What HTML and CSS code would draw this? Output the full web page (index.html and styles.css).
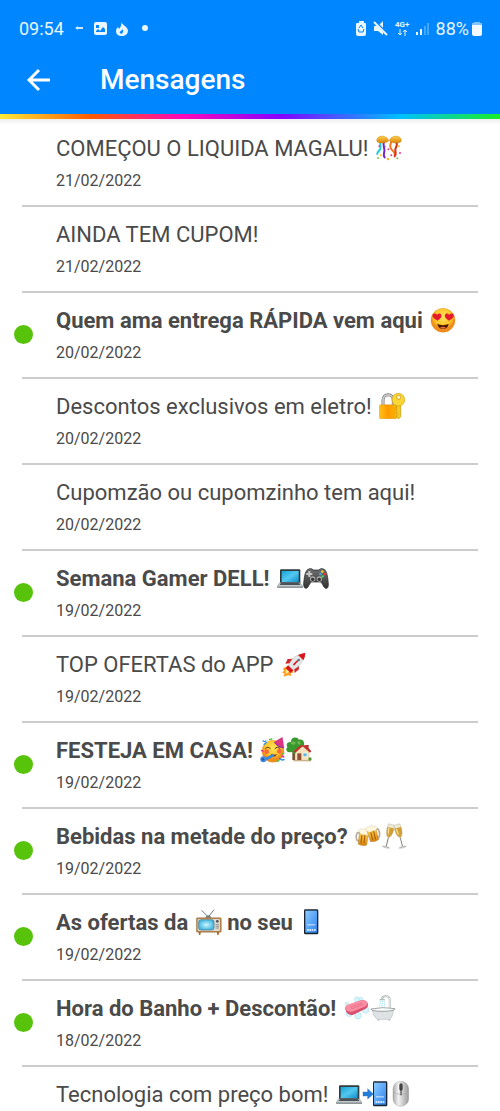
FILE: index.html
```html
<!DOCTYPE html>
<html lang="pt-BR">
<head>
  <meta charset="UTF-8">
  <meta name="viewport" content="width=device-width, initial-scale=1.0">
  <title>Mensagens</title>
  <link rel="stylesheet" href="styles.css">
</head>
<body>
  <!-- Desenhos usados nos títulos -->
  <svg class="sprite" aria-hidden="true">
    <defs>
      <linearGradient id="gold" x2="0" y2="1"><stop offset="0" stop-color="#ffcf4a"/><stop offset="1" stop-color="#d98208"/></linearGradient>
      <linearGradient id="lockFill"><stop offset="0" stop-color="#ffc21a"/><stop offset=".5" stop-color="#ff9a00"/><stop offset="1" stop-color="#f7b500"/></linearGradient>
      <radialGradient id="face" cx=".5" cy=".35"><stop offset="0" stop-color="#ffe45c"/><stop offset=".7" stop-color="#fdc62a"/><stop offset="1" stop-color="#ee8d1c"/></radialGradient>
      <linearGradient id="screen" x2="1" y2="1"><stop offset="0" stop-color="#12a2da"/><stop offset=".5" stop-color="#54c8ef"/><stop offset="1" stop-color="#0d8fcc"/></linearGradient>
      <linearGradient id="phoneFill" x2="1" y2="1"><stop offset="0" stop-color="#8ccbff"/><stop offset="1" stop-color="#2f83ee"/></linearGradient>
      <linearGradient id="pad" x2="0" y2="1"><stop offset="0" stop-color="#707070"/><stop offset="1" stop-color="#333"/></linearGradient>
      <linearGradient id="silver"><stop offset="0" stop-color="#aaa"/><stop offset=".35" stop-color="#f2f2f2"/><stop offset="1" stop-color="#999"/></linearGradient>
      <radialGradient id="tvFill"><stop offset="0" stop-color="#c9f5ff"/><stop offset="1" stop-color="#48b8e2"/></radialGradient>
    </defs>
    <symbol id="confetti" viewBox="0 0 78 78">
      <g fill="none" stroke-width="6" stroke-linecap="round">
        <path stroke="#1ccfd4" d="M14 20c-4 12 2 12-1 21-3 8-10 9-9 16"/>
        <path stroke="#7424c7" d="M24 20c-5 12 3 18 1 29-1 9-4 11 1 18"/>
        <path stroke="#f67718" d="M46 20c-4 12-5 17 1 24 6 7 10 7 9 14"/>
        <path stroke="#d82f16" d="M60 20c8 10-2 16-2 24 0 8 4 14-2 20"/>
      </g>
      <path fill="url(#gold)" stroke="#ba760b" d="M3 20C-1 8 12 1 24 4q11 3 14 12c-1 9-28 11-35 4zM75 20C79 8 66 1 54 4q-11 3-14 12c1 9 28 11 35 4z"/>
      <g fill="#f238a0"><circle cx="10" cy="34" r="3"/><circle cx="46" cy="61" r="3"/><circle cx="72" cy="54" r="3"/><circle cx="37" cy="43" r="3"/></g>
      <g fill="#ffb81c"><circle cx="36" cy="72" r="4"/><circle cx="14" cy="61" r="3"/><circle cx="69" cy="34" r="3"/></g>
      <g fill="#7bbd42"><circle cx="29" cy="34" r="2"/><circle cx="6" cy="69" r="3"/><circle cx="64" cy="70" r="3"/></g>
    </symbol>
    <symbol id="heart-eyes" viewBox="0 0 78 78">
      <circle cx="39" cy="40" r="36" fill="url(#face)" stroke="#d97813"/>
      <path fill="#e5192b" d="M22 41C8 33 5 27 9 22c4-4 10-2 12 2 3-5 10-6 13-1 3 6-3 12-12 18zM57 41C48 35 42 29 45 23c3-5 10-4 12 1 3-4 9-6 13-2 4 6-1 12-13 19z"/>
      <path fill="#4b1a05" d="M22 51q17 7 34 0c-3 20-31 20-34 0z"/><path fill="#f76b43" d="M30 62q9-6 18 0-9 6-18 0z"/>
    </symbol>
    <symbol id="lock" viewBox="0 0 78 78">
      <path fill="none" stroke="#777" stroke-width="9" d="M12 39V22C12 0 43 0 43 22v17"/>
      <path fill="none" stroke="#ccc" stroke-width="5" d="M12 39V22C12 0 43 0 43 22v17"/>
      <rect x="1" y="35" width="52" height="42" rx="4" fill="url(#lockFill)" stroke="#d88000"/>
      <path fill="#f7c81e" stroke="#c69205" stroke-width="2" d="M53 33h12v38l-5 6-9-5 5-7-4-5 4-4-4-4z"/>
      <circle cx="58" cy="20" r="19" fill="#fbd735" stroke="#cf9b0c" stroke-width="2"/><circle cx="59" cy="13" r="6" fill="#fff6c9" stroke="#b88b13" stroke-width="2"/>
    </symbol>
    <symbol id="laptop" viewBox="0 0 78 78">
      <path fill="#303b40" d="M12 13h55q3 0 3 3v42H9V16q0-3 3-3z"/><path fill="url(#screen)" d="M14 18h51v33H14z"/>
      <path fill="#c4cacc" stroke="#626b70" d="M8 53h62l8 12H0z"/><path fill="#495359" d="M12 54h54l4 6H8z"/><path fill="#6e777a" d="M0 65h78v3H1z"/>
    </symbol>
    <symbol id="gamepad" viewBox="0 0 78 78">
      <path fill="url(#pad)" stroke="#222" stroke-width="2" d="M15 13q9-6 17 2h14q9-8 18-2c9 6 11 29 12 44 1 18-11 17-17 2l-5-8H24l-7 11C10 77 0 69 2 54c2-15 3-35 13-41z"/>
      <g fill="#aaa"><circle cx="29" cy="42" r="8"/><circle cx="49" cy="42" r="8"/></g><g fill="#333"><circle cx="29" cy="43" r="5"/><circle cx="49" cy="43" r="5"/></g>
      <path fill="#c7c7c7" d="M16 18h6v6h6v6h-6v6h-6v-6h-6v-6h6z"/>
      <circle cx="58" cy="20" r="4" fill="#edc72f"/><circle cx="52" cy="27" r="4" fill="#49a7e3"/><circle cx="66" cy="27" r="4" fill="#ee3932"/><circle cx="59" cy="34" r="4" fill="#53c765"/>
    </symbol>
    <symbol id="rocket" viewBox="0 0 78 78">
      <path fill="#ff9e27" d="M18 46L6 52l3 7-6 6 7 2-2 10 13-4 10 2-2-8 9-3-4-9z"/><path fill="#fff08c" d="M22 50l-9 11 3 7 15-10z"/>
      <path fill="#d3282b" d="M37 23L20 24 13 38l14-1zM53 38l1 17-13 11-2-16z"/>
      <path fill="#e3e7e7" stroke="#9ca8a8" d="M22 45C30 24 43 10 69 9c0 23-14 39-36 49z"/>
      <path fill="#d9171f" d="M51 12q10-5 22-7 0 13-6 23zM21 43l16 15-8 8-15-14zM36 40l13-13 3 3-13 14z"/>
      <circle cx="53" cy="27" r="4" fill="#60777e"/>
    </symbol>
    <symbol id="party-face" viewBox="0 0 78 78">
      <circle cx="39" cy="43" r="33" fill="url(#face)" stroke="#df8b21"/>
      <path fill="#dd3584" stroke="#b2215f" d="M42 16L67 1l5 32q-18 0-30-17z"/><path fill="none" stroke="#7c37bd" stroke-width="3" d="M44 17q11 14 26 16"/>
      <g fill="#ff653c"><circle cx="20" cy="44" r="7"/><circle cx="58" cy="43" r="7"/></g>
      <path fill="none" stroke="#563210" stroke-width="3" stroke-linecap="round" d="M16 35q7-9 15 0M45 35q7-9 15 0"/>
      <path fill="#8d371b" d="M32 51q10 4 19 0-3 12-16 7z"/>
      <path fill="none" stroke="#3686de" stroke-width="8" stroke-linecap="round" d="M39 55L18 66"/><circle cx="10" cy="67" r="9" fill="#4288df"/><circle cx="9" cy="67" r="4" fill="#235cad"/>
      <path fill="none" stroke="#2b8cef" stroke-width="4" d="M8 10q6 7 11 1M11 23l9-7M57 63l8 6 9-1"/><path fill="none" stroke="#4bc23f" stroke-width="4" d="M27 8l10-2M65 51l8-3M50 74l8-4"/><path fill="none" stroke="#e32ba2" stroke-width="4" d="M3 40l8 3M65 56l8 5"/>
    </symbol>
    <symbol id="house" viewBox="0 0 78 78">
      <path fill="#75512e" d="M19 36h8v33h-8z"/><path fill="#39982e" d="M15 15c0-18 22-15 23-7 15-5 21 13 13 20 5 14-9 20-15 15-4 11-16 7-17 1C4 51-4 38 4 31-1 20 5 14 15 15z"/><path fill="#68b84e" d="M13 19q9-12 17 0-8 9-17 0zM32 14q14-5 12 8-8 4-12-8z"/>
      <path fill="#f4e1bb" stroke="#b79770" d="M28 43l19-17 22 17v27H28z"/><path fill="#bf302f" d="M23 43l20-18h18l15 18-4 4-22-19-22 19zM59 24h9v14l-9-8z"/>
      <path fill="#8e4d34" d="M34 49h12v21H34z"/><path fill="#5db3d7" stroke="#fff" stroke-width="2" d="M51 48h12v11H51z"/><path fill="#cab28a" d="M22 69h52v4H22z"/><circle cx="72" cy="66" r="5" fill="#4b9937"/>
    </symbol>
    <symbol id="beers" viewBox="0 0 78 78">
      <g transform="rotate(8 23 44)"><path fill="none" stroke="#b9ad9f" stroke-width="5" d="M13 31H5Q0 44 8 55h6"/><path fill="url(#gold)" stroke="#957754" d="M11 29h28l-1 36q-13 6-26 0z"/><path stroke="#a05b12" stroke-width="3" d="M20 35v26M29 35v26"/><path fill="#fff8df" stroke="#cfbd97" d="M8 24q4-9 12-5 8-6 12 1 10-1 9 9-10 12-14 3-9 10-19-8z"/></g>
      <g transform="rotate(-14 55 34)"><path fill="none" stroke="#b9ad9f" stroke-width="5" d="M65 21h7q6 12-2 25h-7"/><path fill="url(#gold)" stroke="#957754" d="M39 19h28v34q-13 6-26 0z"/><path stroke="#a05b12" stroke-width="3" d="M49 25v25M58 25v25"/><path fill="#fff8df" stroke="#cfbd97" d="M36 15q3-10 12-5 8-7 13 1 11-1 9 9-9 9-15 2-9 10-19-7z"/></g>
    </symbol>
    <symbol id="glasses" viewBox="0 0 78 78">
      <g transform="rotate(14 27 24)">
        <path fill="#eee9d6" stroke="#a7a18b" d="M17 4h19q5 34-9 42-14-8-10-42z"/><path fill="#cf9e35" d="M17 14h20q1 24-10 30-12-7-10-30z"/><path fill="#f5dd8d" d="M20 16h4l2 21q-7-5-6-21z"/>
        <path fill="none" stroke="#85837b" stroke-width="3" d="M27 45v27"/><path fill="#deddda" stroke="#777" d="M16 74q11-6 22 0-11 5-22 0z"/>
      </g>
      <g transform="rotate(-14 53 24)">
        <path fill="#eee9d6" stroke="#a7a18b" d="M43 4h19q5 34-9 42-14-8-10-42z"/><path fill="#cf9e35" d="M43 14h20q1 24-10 30-12-7-10-30z"/><path fill="#f5dd8d" d="M46 16h4l2 21q-7-5-6-21z"/>
        <path fill="none" stroke="#85837b" stroke-width="3" d="M53 45v27"/><path fill="#deddda" stroke="#777" d="M42 74q11-6 22 0-11 5-22 0z"/>
      </g>
    </symbol>
    <symbol id="tv" viewBox="0 0 78 78">
      <path fill="none" stroke="#75797b" stroke-width="3" d="M17 4l20 20L54 2"/><path fill="#727b7e" d="M27 26q10-14 20 0z"/>
      <path fill="#a86d2e" d="M7 66h8l-2 12H9zM62 66h8l-2 12h-4z"/><rect x="1" y="26" width="75" height="44" rx="4" fill="#b98245" stroke="#80562c"/><rect x="5" y="30" width="67" height="36" rx="3" fill="#d9d9d4"/>
      <rect x="8" y="32" width="46" height="31" rx="7" fill="url(#tvFill)" stroke="#47727f" stroke-width="2"/><circle cx="64" cy="37" r="4" fill="#4d5254"/><path stroke="#777" stroke-width="2" d="M59 47h10M59 52h10M59 57h10"/>
    </symbol>
    <symbol id="phone" viewBox="0 0 78 78">
      <rect x="18" y="1" width="43" height="75" rx="4" fill="#182431"/><path fill="url(#phoneFill)" d="M22 5h35v66H22z"/><path fill="#fff" opacity=".75" d="M27 46h25v3H27z"/><path stroke="#fff" stroke-width="4" stroke-dasharray="5 2" d="M27 63h26"/>
    </symbol>
    <symbol id="soap" viewBox="0 0 78 78">
      <g fill="#d5f3fa" stroke="#8bcddd"><circle cx="16" cy="55" r="10"/><circle cx="39" cy="13" r="8"/><circle cx="51" cy="13" r="6"/><circle cx="65" cy="45" r="10"/><circle cx="42" cy="62" r="10"/><circle cx="8" cy="27" r="5"/></g>
      <path fill="#d95070" d="M4 43q-2-9 8-13l40-14q15-3 19 9 4 10-6 16L28 59Q9 63 4 43z"/><path fill="#fa8da2" d="M4 39q0-7 11-11l37-12q13-2 17 7 3 8-7 12L25 50Q9 53 4 39z"/><path fill="none" stroke="#e76680" stroke-width="2" d="M20 36l32-11q7 1 1 5L24 41z"/>
    </symbol>
    <symbol id="bath" viewBox="0 0 78 78">
      <path fill="none" stroke="#8f9698" stroke-width="5" d="M59 42V12q-2-11-16-8-7 2-7 9"/><path fill="none" stroke="#eef0f1" stroke-width="3" d="M59 42V12q-2-11-16-8-7 2-7 9"/>
      <path fill="#c7d0d3" stroke="#849195" d="M28 15q8-8 17 0z"/><path stroke="#a8e2f5" stroke-width="3" stroke-dasharray="4 2" d="M32 18l-3 18M37 18v18M42 18l3 18"/>
      <path fill="#dee2e3" stroke="#828b8e" d="M7 45h63q-2 22-11 28H23Q10 66 7 45z"/><path fill="#f8fafb" stroke="#777f81" stroke-width="2" d="M3 42q35-8 72-1 0 7-36 8-34 0-36-7z"/><path fill="#bcc2c4" d="M22 73h7l-2 4h-5zM54 73h7v4h-5z"/>
    </symbol>
    <symbol id="phone-arrow" viewBox="0 0 78 78">
      <rect x="33" y="1" width="43" height="75" rx="4" fill="#182431"/><path fill="url(#phoneFill)" d="M36 5h36v66H36z"/><path fill="#fff" opacity=".75" d="M42 46h24v3H42z"/><path stroke="#fff" stroke-width="4" stroke-dasharray="5 2" d="M41 63h26"/><path fill="#247fda" stroke="#1160ae" d="M3 33h14V23l17 16-17 15V45H3z"/>
    </symbol>
    <symbol id="mouse" viewBox="0 0 78 78">
      <rect x="15" y="1" width="47" height="75" rx="23" fill="url(#silver)" stroke="#888"/><path fill="none" stroke="#aaa" stroke-width="2" d="M16 32q23 17 45 0"/><rect x="34" y="7" width="10" height="22" rx="5" fill="#444"/><path stroke="#333" stroke-width="3" d="M39 23v20"/>
    </symbol>
  </svg>

  <div class="app">
    <header class="topbar">
      <div class="status">
        <div class="status-group">
          <span class="clock">09:54</span>
          <svg class="notices" viewBox="0 0 78 18" aria-hidden="true">
            <path fill="#fff" d="M3 8l3-2v1h5v2H6v1z" opacity=".8"/>
            <path fill="#e9f5ff" fill-rule="evenodd" d="M24 2h9q2 0 2 2v9q0 2-2 2h-9q-2 0-2-2V4q0-2 2-2zm0 10h9V9l-2-2-3 4-2-2-2 2zm0-7v3h3V5z"/>
            <path fill="#e9f5ff" fill-rule="evenodd" d="M49 1c0 4 7 5 7 10 0 3-3 5-6 5-4 0-6-2-6-5 0-2 1-3 2-4l1 2c2-2 3-5 2-8zm2 8c-1 2-4 2-3 4 1 2 4 0 3-4z"/>
            <circle cx="73" cy="8" r="3" fill="#e9f5ff"/>
          </svg>
        </div>
        <div class="status-group">
          <svg class="signals" viewBox="0 0 74 18" aria-hidden="true">
            <path fill="#e9f5ff" d="M3 3V1h5v2h1q1 0 1 1v10q0 2-2 2H2q-2 0-2-2V4q0-1 1-1z"/>
            <path fill="none" stroke="#0086ff" d="M3 8l2-3 2 3M2 9l1 3h2M8 9l-1 3H5"/>
            <path fill="#e9f5ff" d="M18 6h4l5-5v14l-5-4h-4z"/><path stroke="#0086ff" stroke-width="3" d="M18 1l14 14"/><path stroke="#e9f5ff" stroke-width="2" d="M18 2l13 13"/>
            <text class="network" x="39" y="7">4G+</text>
            <path fill="none" stroke="#e9f5ff" d="M44 9v6M42 13l2 2 2-2M49 16v-6M47 12l2-2 2 2"/>
            <path stroke="#e9f5ff" stroke-width="2" d="M61 15v-3M65 15V9"/><path stroke="#8bc8ff" d="M69 15V6M72 15V3"/>
          </svg>
          <span class="battery-level">88%</span>
          <svg class="battery" viewBox="0 0 10 16" aria-hidden="true"><path fill="#7fc2ff" d="M2 2V1h6v1h2v4H0V2z"/><path fill="#f3faff" d="M0 4h10v9q0 2-2 2H2q-2 0-2-2z"/></svg>
        </div>
      </div>
      <div class="toolbar">
        <button class="back" type="button" aria-label="Voltar">
          <svg viewBox="0 0 24 24"><path fill="none" stroke="#fff" stroke-width="3" d="M12 2L2 12l10 10M2 12h21"/></svg>
        </button>
        <h1>Mensagens</h1>
      </div>
    </header>
    <div class="rainbow"></div>

    <main class="content">
      <ul class="messages">
        <li><a class="message" href="#"><span class="title">COMEÇOU O LIQUIDA MAGALU! <svg class="emoji"><use href="#confetti"/></svg></span><time>21/02/2022</time></a></li>
        <li><a class="message" href="#"><span class="title">AINDA TEM CUPOM!</span><time>21/02/2022</time></a></li>
        <li><a class="message unread" href="#"><span class="title">Quem ama entrega RÁPIDA vem aqui <svg class="emoji"><use href="#heart-eyes"/></svg></span><time>20/02/2022</time></a></li>
        <li><a class="message" href="#"><span class="title">Descontos exclusivos em eletro! <svg class="emoji"><use href="#lock"/></svg></span><time>20/02/2022</time></a></li>
        <li><a class="message" href="#"><span class="title">Cupomzão ou cupomzinho tem aqui!</span><time>20/02/2022</time></a></li>
        <li><a class="message unread" href="#"><span class="title">Semana Gamer DELL! <svg class="emoji"><use href="#laptop"/></svg><svg class="emoji"><use href="#gamepad"/></svg></span><time>19/02/2022</time></a></li>
        <li><a class="message" href="#"><span class="title">TOP OFERTAS do APP <svg class="emoji"><use href="#rocket"/></svg></span><time>19/02/2022</time></a></li>
        <li><a class="message unread" href="#"><span class="title">FESTEJA EM CASA! <svg class="emoji"><use href="#party-face"/></svg><svg class="emoji"><use href="#house"/></svg></span><time>19/02/2022</time></a></li>
        <li><a class="message unread" href="#"><span class="title">Bebidas na metade do preço? <svg class="emoji"><use href="#beers"/></svg><svg class="emoji"><use href="#glasses"/></svg></span><time>19/02/2022</time></a></li>
        <li><a class="message unread" href="#"><span class="title">As ofertas da <svg class="emoji"><use href="#tv"/></svg> no seu <svg class="emoji"><use href="#phone"/></svg></span><time>19/02/2022</time></a></li>
        <li><a class="message unread" href="#"><span class="title">Hora do Banho + Descontão! <svg class="emoji"><use href="#soap"/></svg><svg class="emoji"><use href="#bath"/></svg></span><time>18/02/2022</time></a></li>
        <li><a class="message" href="#"><span class="title">Tecnologia com preço bom! <svg class="emoji"><use href="#laptop"/></svg><svg class="emoji"><use href="#phone-arrow"/></svg><svg class="emoji"><use href="#mouse"/></svg></span></a></li>
      </ul>
    </main>
  </div>
</body>
</html>
```
FILE: styles.css
```css
* {
  box-sizing: border-box;
}
body {
  margin: 0;
  font-family: Roboto, "Noto Sans", sans-serif;
  color: #4a4a4a;
  background: #fff;
}
.sprite {
  position: absolute;
  width: 0;
  height: 0;
}
.app {
  display: flex;
  flex-direction: column;
  height: 100vh;
}
.topbar {
  flex: none;
  padding-top: 16px;
  background: #0086ff;
  color: #fff;
}
.status {
  display: flex;
  justify-content: space-between;
  padding: 0 18px 0 19px;
  font-size: 18px;
  line-height: 26px;
  color: #e9f5ff;
}
.status-group {
  display: flex;
  align-items: center;
}
.notices {
  width: 78px;
  height: 18px;
  margin-left: 8px;
}
.signals {
  width: 74px;
  height: 18px;
  margin-right: 6px;
}
.network {
  font-size: 8px;
  font-weight: bold;
  fill: #e9f5ff;
}
.battery {
  width: 10px;
  height: 16px;
  margin-left: 3px;
}
.toolbar {
  display: flex;
  align-items: center;
  gap: 49px;
  height: 72px;
  padding: 4px 27px 0;
}
.back {
  width: 24px;
  height: 24px;
  padding: 0;
  border: none;
  background: none;
  cursor: pointer;
}
.back svg {
  display: block;
  width: 24px;
  height: 24px;
}
h1 {
  margin: 0;
  font-size: 28px;
  line-height: 36px;
  font-weight: 500;
}
.rainbow {
  flex: none;
  height: 5px;
  background: linear-gradient(90deg, #ffeb38, #ff5b00 18%, #ff08b5 36%, #8500ff 56%, #00bfff 80%, #19ed26);
}
.content {
  flex: 1;
  min-height: 0;
  overflow: hidden;
  background: linear-gradient(#eee, #fff 6px);
}
.messages {
  margin: 0;
  padding: 2px 22px 0;
  list-style: none;
}
.message {
  position: relative;
  display: flex;
  flex-direction: column;
  height: 86px;
  padding: 13px 0 0 34px;
  border-bottom: 2px solid #ccc;
  color: inherit;
  text-decoration: none;
}
.title {
  font-size: 22px;
  line-height: 30px;
  white-space: nowrap;
}
time {
  margin-top: 6px;
  font-size: 16px;
  line-height: 22px;
}
.unread .title {
  font-weight: bold;
}
.unread::before {
  content: "";
  position: absolute;
  left: -8px;
  top: 32px;
  width: 19px;
  height: 19px;
  border-radius: 50%;
  background: #58c30b;
}
.emoji {
  width: 26px;
  height: 26px;
  vertical-align: -5px;
}
.emoji:first-of-type {
  margin-left: 2px;
}
```
